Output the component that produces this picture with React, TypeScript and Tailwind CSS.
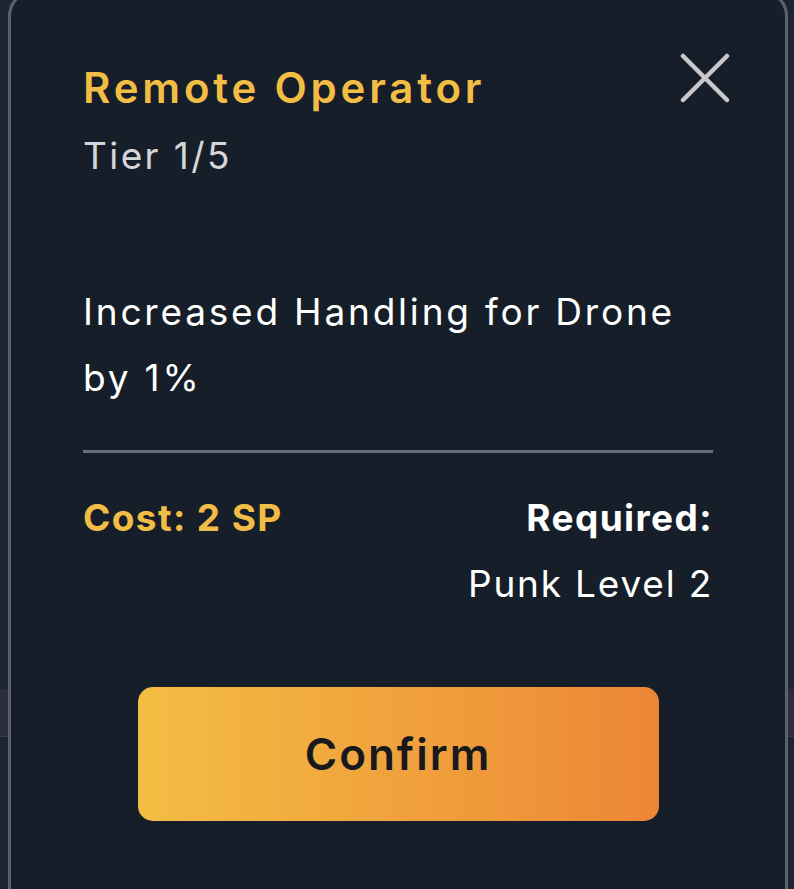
export default function App() {
  return (
    <div
      className="relative h-[889px] w-full overflow-hidden bg-[#1d2330]"
      style={{ fontFamily: "Inter, 'Noto Sans', sans-serif" }}
    >
      {/* page behind the modal */}
      <div className="pt-[689px]">
        <div className="h-[48px] border-b border-[#363b48] bg-[#2a2e3b]" />
      </div>

      {/* skill modal */}
      <div
        className={`
          absolute top-[-10px] right-[6px] bottom-[-40px] left-[8px]
          rounded-[26px] border-[3px] border-[#5b606e] bg-[#161f29]
          px-[72px] pt-[70px]
        `}
      >
        <div className="flex items-start justify-between">
          <div>
            <h2 className="text-[42px] leading-[50px] font-semibold tracking-[3.8px] text-[#f2bd44]">
              Remote Operator
            </h2>
            <p className="mt-[21px] text-[37px] leading-[44px] tracking-[2.4px] text-[#d6d6d8]">
              Tier 1/5
            </p>
          </div>
          <button className="mt-[-10px] mr-[-17px] text-[#c9c9cb]">
            <svg width="50" height="50" viewBox="0 0 50 50" fill="none">
              <path
                d="M3 3 47 47M47 3 3 47"
                stroke="currentColor"
                strokeWidth="4.5"
                strokeLinecap="round"
              />
            </svg>
          </button>
        </div>

        <div className="mt-[101px] text-[37px] leading-[66px] tracking-[2.8px] text-white">
          Increased Handling for Drone
          <br />
          by 1%
        </div>

        <div className="mt-[39px] h-[3px] bg-[#686c76]" />

        <div className="mt-[43px] flex items-start justify-between text-[37px] tracking-[1.4px]">
          <span className="leading-[44px] font-bold text-[#f2bd44]">
            Cost: 2 SP
          </span>
          <div className="text-right text-white">
            <div className="leading-[44px] font-bold">Required:</div>
            <div className="mt-[22px] leading-[44px] tracking-[1.8px]">Punk Level 2</div>
          </div>
        </div>

        <div className="mt-[81px] flex justify-center">
          <button
            className={`
              h-[134px] w-[521px] rounded-[15px] bg-gradient-to-r
              from-[#f3bd43] to-[#ec8636] text-[44px] font-semibold
              tracking-[2px] text-[#17191d]
            `}
          >
            Confirm
          </button>
        </div>
      </div>
    </div>
  );
}
